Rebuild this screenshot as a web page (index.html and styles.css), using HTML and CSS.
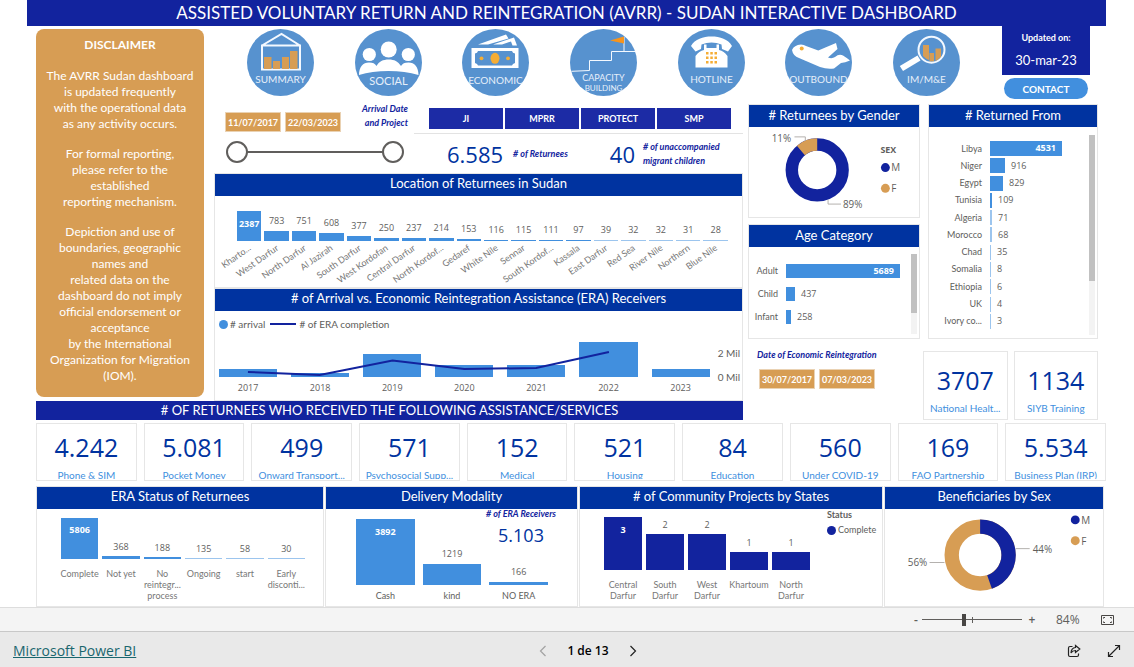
FILE: index.html
```html
<!DOCTYPE html>
<html lang="en">
<head>
<meta charset="utf-8">
<title>AVRR - Sudan Interactive Dashboard</title>
<link rel="stylesheet" href="styles.css">
</head>
<body>
<header class="title"><h1>ASSISTED VOLUNTARY RETURN AND REINTEGRATION (AVRR) - SUDAN INTERACTIVE DASHBOARD</h1></header>

<main class="board">
  <div class="upper">
    <aside class="disclaimer">
      <h2>DISCLAIMER</h2>
      <p>The AVRR Sudan dashboard<br>is updated frequently<br>with the operational data<br>as any activity occurs.</p>
      <p>For formal reporting,<br>please refer to the<br>established<br>reporting mechanism.</p>
      <p>Depiction and use of<br>boundaries, geographic<br>names and<br>related data on the<br>dashboard do not imply<br>official endorsement or<br>acceptance<br>by the International<br>Organization for Migration<br>(IOM).</p>
    </aside>

    <div class="top">
      <nav class="pages">
        <a href="#summary"><svg viewBox="0 0 67 67"><circle class="disc" cx="33.500" cy="33.500" r="33.500"/>
          <path class="line" d="M15 16.500H53V40.500H15ZM15 16.500L34.500 5L53 16.500"/>
          <path class="gold" d="M17 28h7.500v12H17zM26 32h7v8h-7zM35 28h7v12h-7zM43 22h7.500v18H43z"/>
          <text x="33.500" y="54" font-size="10">SUMMARY</text></svg></a>
        <a href="#social"><svg viewBox="0 0 67 67"><circle class="disc" cx="33.500" cy="33.500" r="33.500"/>
          <g class="white"><circle cx="14.300" cy="25.500" r="6.600"/><circle cx="53.300" cy="25.500" r="6.600"/><circle cx="33.700" cy="20.500" r="8"/>
          <path d="M4 46C4 38 8 33.500 14 33.500c4 0 6 1 7.500 3.500C24 32.500 28 30.500 33.700 30.500S43 32.500 46 37c1.500-2.500 3.500-3.500 7.500-3.500 6 0 10 4.500 10 12.500Q50 42 33.500 42T4 46Z"/></g>
          <text x="33.500" y="56" font-size="11">SOCIAL</text></svg></a>
        <a href="#economic"><svg viewBox="0 0 67 67"><circle class="disc" cx="33.500" cy="33.500" r="33.500"/>
          <path class="white" d="M9.500 19H56.500V39H9.500ZM16 15.500L44 5.500 46.500 9.500 26 15.500ZM31 15.500L52 8.500 55 16.500H50.500L49 12.500 40 15.500Z"/>
          <path class="disc" d="M16 22H50Q50.500 24 53 24.500V34Q50.500 34.500 50 36.500H16Q15.500 34.500 13 34V24.500Q15.500 24 16 22Z"/>
          <g class="amber"><ellipse cx="33" cy="29.300" rx="4.500" ry="5.500"/><circle cx="19.500" cy="29.300" r="1.900"/><circle cx="46" cy="29.300" r="1.900"/></g>
          <text x="33.500" y="54.500" font-size="10">ECONOMIC</text></svg></a>
        <a href="#capacity"><svg viewBox="0 0 67 67"><circle class="disc" cx="33.500" cy="33.500" r="33.500"/>
          <path class="line thin" d="M1.500 42.300L19.500 41.500V31.500H41.500V22.500H65M54 22.500V8"/>
          <path class="flag" d="M40 11.500L54 7.500V14.500Z"/>
          <text x="33.500" y="52" font-size="9">CAPACITY</text><text x="33.500" y="62" font-size="8">BUILDING</text></svg></a>
        <a href="#hotline"><svg viewBox="0 0 67 67"><circle class="disc" cx="33.500" cy="33.500" r="33.500"/>
          <path class="white" d="M13 17C17 10 25 7.500 33.500 7.500S50 10 54 17L50 22.500 44 20 43.500 15.500Q33.500 11.500 23.500 15.500L23 20 17.500 22.500ZM26 15.500H28.500V19H38.500V15.500H41V21Q46 22 49.500 27V38.500H17.500V27Q21 22 26 21Z"/>
          <path class="amber" d="M28 23h2.500v2.500H28zM32.300 23h2.500v2.500h-2.500zM36.500 23H39v2.500h-2.500zM28 27.500h2.500V30H28zM32.300 27.500h2.500V30h-2.500zM36.500 27.500H39V30h-2.500zM28 32h2.500v2.500H28zM32.300 32h2.500v2.500h-2.500zM36.500 32H39v2.500h-2.500z"/>
          <text x="33.500" y="54" font-size="10">HOTLINE</text></svg></a>
        <a href="#outbound"><svg viewBox="0 0 67 67"><circle class="disc" cx="33.500" cy="33.500" r="33.500"/>
          <path class="white" d="M7 21Q9 16 16 15.500 19 15.500 21 17L33.300 21.500 51 14 52.500 20 43 28.500Q47 30 50 28 54 24.500 58 26.500 62 29 65 31.500 60 33.500 56 34L49 39.500Q42 40.500 35 38L14 29Q8 27 7 21Z"/>
          <circle class="amber" cx="16.700" cy="19.500" r="2"/>
          <text x="33.500" y="54" font-size="10">OUTBOUND</text></svg></a>
        <a href="#imme"><svg viewBox="0 0 67 67"><circle class="disc" cx="33.500" cy="33.500" r="33.500"/>
          <path class="gold" d="M30 16h6v15q-3-1-6-4zM36.500 24H41v8.500h-4.500zM42.500 19.500h5.500V28q-3 3-5.500 4z"/>
          <circle class="line" cx="38.500" cy="20.700" r="13"/>
          <path class="white" d="M24.500 26.500L27.500 31.500 10 42 6.800 37Z"/>
          <text x="33.500" y="54" font-size="10">IM/M&amp;E</text></svg></a>
      </nav>
      <div class="updated-col">
        <div class="updated"><span>Updated on:</span><strong>30-mar-23</strong></div>
        <button class="contact" type="button">CONTACT</button>
      </div>
    </div>

    <div class="middle">
      <div class="filters">
        <div class="arrival">
          <div class="arrival-head">
            <div class="dates">
              <input class="date" type="text" value="11/07/2017" aria-label="Arrival from">
              <input class="date" type="text" value="22/03/2023" aria-label="Arrival to">
            </div>
            <p class="note">Arrival Date<br>and Project</p>
          </div>
          <div class="range">
            <input type="range" min="0" max="100" value="0" aria-label="Range start">
            <input type="range" min="0" max="100" value="100" aria-label="Range end">
          </div>
        </div>
        <div class="projects">
          <div class="project-buttons">
            <button type="button">JI</button><button type="button">MPRR</button><button type="button">PROTECT</button><button type="button">SMP</button>
          </div>
          <div class="totals">
            <b class="num">6.585</b><span class="note"># of Returnees</span>
            <b class="num second">40</b><span class="note"># of unaccompanied<br>migrant children</span>
          </div>
        </div>
      </div>

      <section class="panel location">
        <h2>Location of Returnees in Sudan</h2>
        <div class="cols slanted">
          <div><b class="in">2387</b><i style="height:30px"></i><span>Kharto...</span></div>
          <div><b>783</b><i style="height:10px"></i><span>West Darfur</span></div>
          <div><b>751</b><i style="height:10px"></i><span>North Darfur</span></div>
          <div><b>608</b><i style="height:8px"></i><span>Al Jazirah</span></div>
          <div><b>377</b><i style="height:5px"></i><span>South Darfur</span></div>
          <div><b>250</b><i style="height:3px"></i><span>West Kordofan</span></div>
          <div><b>237</b><i style="height:3px"></i><span>Central Darfur</span></div>
          <div><b>214</b><i style="height:3px"></i><span>North Kordof...</span></div>
          <div><b>153</b><i style="height:2px"></i><span>Gedaref</span></div>
          <div><b>116</b><i style="height:1px"></i><span>White Nile</span></div>
          <div><b>115</b><i style="height:1px"></i><span>Sennar</span></div>
          <div><b>111</b><i style="height:1px"></i><span>South Kordof...</span></div>
          <div><b>97</b><i style="height:1px"></i><span>Kassala</span></div>
          <div><b>39</b><i class="faint" style="height:1px"></i><span>East Darfur</span></div>
          <div><b>32</b><i class="faint" style="height:1px"></i><span>Red Sea</span></div>
          <div><b>32</b><i class="faint" style="height:1px"></i><span>River Nile</span></div>
          <div><b>31</b><i class="faint" style="height:1px"></i><span>Northern</span></div>
          <div><b>28</b><i class="faint" style="height:1px"></i><span>Blue Nile</span></div>
        </div>
      </section>

      <section class="panel arrivals">
        <h2># of Arrival vs. Economic Reintegration Assistance (ERA) Receivers</h2>
        <div class="legend"><i class="dot sky"></i># arrival<i class="dash"></i># of ERA completion</div>
        <div class="combo">
          <div class="combo-plot">
            <div class="cols years">
              <div><i style="height:8px"></i><span>2017</span></div>
              <div><i style="height:4px"></i><span>2018</span></div>
              <div><i style="height:23px"></i><span>2019</span></div>
              <div><i style="height:12px"></i><span>2020</span></div>
              <div><i style="height:12px"></i><span>2021</span></div>
              <div><i style="height:35px"></i><span>2022</span></div>
              <div><i style="height:8px"></i><span>2023</span></div>
            </div>
            <svg class="trend" viewBox="0 0 492 36" preserveAspectRatio="none"><polyline points="29,30 101,33 174,18.500 246,27 318,26 391,10"/></svg>
          </div>
          <div class="axis"><span>2 Mil</span><span>0 Mil</span></div>
        </div>
      </section>
    </div>

    <div class="right">
      <section class="panel gender">
        <h2># Returnees by Gender</h2>
        <svg class="pie" viewBox="0 0 172 90">
          <circle class="ring navy" cx="69" cy="43.500" r="25.700" stroke-width="12.600"/>
          <path class="ring tan" d="M52.500 23.800A25.700 25.700 0 0 1 69 17.800" stroke-width="12.600"/>
          <path class="lead" d="M46 10H57V14M80 74V78H93"/>
          <text x="23" y="15">11%</text><text x="95" y="82">89%</text>
          <text class="strong" x="133" y="26">SEX</text>
          <circle class="fill-navy" cx="138" cy="41" r="4.500"/><text x="144" y="45">M</text>
          <circle class="fill-tan" cx="138" cy="62" r="4.500"/><text x="144" y="66">F</text>
        </svg>
      </section>
      <section class="panel age">
        <h2>Age Category</h2>
        <div class="rows">
          <div><span>Adult</span><i style="width:114px"><b>5689</b></i></div>
          <div><span>Child</span><i style="width:9px"></i><b>437</b></div>
          <div><span>Infant</span><i style="width:5px"></i><b>258</b></div>
          <div class="scroll"></div>
        </div>
      </section>
      <section class="panel from">
        <h2># Returned From</h2>
        <div class="rows">
          <div><span>Libya</span><i style="width:72px"><b>4531</b></i></div>
          <div><span>Niger</span><i style="width:15px"></i><b>916</b></div>
          <div><span>Egypt</span><i style="width:13px"></i><b>829</b></div>
          <div><span>Tunisia</span><i style="width:2px"></i><b>109</b></div>
          <div><span>Algeria</span><i class="faint" style="width:2px"></i><b>71</b></div>
          <div><span>Morocco</span><i class="faint" style="width:2px"></i><b>68</b></div>
          <div><span>Chad</span><i class="faint" style="width:1px"></i><b>35</b></div>
          <div><span>Somalia</span><i class="faint" style="width:1px"></i><b>8</b></div>
          <div><span>Ethiopia</span><i class="faint" style="width:1px"></i><b>6</b></div>
          <div><span>UK</span><i class="faint" style="width:1px"></i><b>4</b></div>
          <div><span>Ivory co...</span><i class="faint" style="width:1px"></i><b>3</b></div>
          <div class="scroll"></div>
        </div>
      </section>
      <div class="era-date">
        <p class="note">Date of Economic Reintegration</p>
        <div class="dates">
          <input class="date" type="text" value="30/07/2017" aria-label="Reintegration from">
          <input class="date" type="text" value="07/03/2023" aria-label="Reintegration to">
        </div>
      </div>
      <div class="pair">
        <div class="kpi"><b>3707</b><span>National Healt...</span></div>
        <div class="kpi"><b>1134</b><span>SIYB Training</span></div>
      </div>
    </div>

    <h2 class="band"># OF RETURNEES WHO RECEIVED THE FOLLOWING ASSISTANCE/SERVICES</h2>
  </div>

  <div class="services">
    <div class="kpi"><b>4.242</b><span>Phone &amp; SIM</span></div>
    <div class="kpi"><b>5.081</b><span>Pocket Money</span></div>
    <div class="kpi"><b>499</b><span>Onward Transport...</span></div>
    <div class="kpi"><b>571</b><span>Psychosocial Supp...</span></div>
    <div class="kpi"><b>152</b><span>Medical</span></div>
    <div class="kpi"><b>521</b><span>Housing</span></div>
    <div class="kpi"><b>84</b><span>Education</span></div>
    <div class="kpi"><b>560</b><span>Under COVID-19</span></div>
    <div class="kpi"><b>169</b><span>FAO Partnership</span></div>
    <div class="kpi"><b>5.534</b><span>Business Plan (IRP)</span></div>
  </div>

  <div class="lower">
    <section class="panel status">
      <h2>ERA Status of Returnees</h2>
      <div class="cols small">
        <div><b class="in">5806</b><i style="height:41px"></i><span>Complete</span></div>
        <div><b>368</b><i style="height:3px"></i><span>Not yet</span></div>
        <div><b>188</b><i style="height:2px"></i><span>No<br>reintegr...<br>process</span></div>
        <div><b>135</b><i class="faint" style="height:1px"></i><span>Ongoing</span></div>
        <div><b>58</b><i class="faint" style="height:1px"></i><span>start</span></div>
        <div><b>30</b><i class="faint" style="height:1px"></i><span>Early<br>disconti...</span></div>
      </div>
    </section>
    <section class="panel delivery">
      <h2>Delivery Modality</h2>
      <div class="cols">
        <div><b class="in">3892</b><i style="height:66px"></i><span>Cash</span></div>
        <div><b>1219</b><i style="height:21px"></i><span>kind</span></div>
        <div><b>166</b><i style="height:3px"></i><span>NO ERA</span></div>
      </div>
      <div class="receivers"><span class="note"># of ERA Receivers</span><b>5.103</b></div>
    </section>
    <section class="panel community">
      <h2># of Community Projects by States</h2>
      <div class="community-body">
        <div class="cols small">
          <div><b class="in">3</b><i style="height:53px"></i><span>Central<br>Darfur</span></div>
          <div><b>2</b><i style="height:36px"></i><span>South<br>Darfur</span></div>
          <div><b>2</b><i style="height:36px"></i><span>West<br>Darfur</span></div>
          <div><b>1</b><i style="height:18px"></i><span>Khartoum</span></div>
          <div><b>1</b><i style="height:18px"></i><span>North<br>Darfur</span></div>
        </div>
        <div class="key"><strong>Status</strong><span><i class="dot navy"></i>Complete</span></div>
      </div>
    </section>
    <section class="panel sex">
      <h2>Beneficiaries by Sex</h2>
      <svg class="pie" viewBox="0 0 220 96">
        <circle class="ring tan" cx="96" cy="46.500" r="28.700" stroke-width="14.500"/>
        <path class="ring navy" d="M96 17.800A28.700 28.700 0 0 1 105.500 73.600" stroke-width="14.500"/>
        <path class="lead" d="M45 54H60M132 40H146"/>
        <text x="23" y="58">56%</text><text x="149" y="44">44%</text>
        <circle class="fill-navy" cx="192" cy="11" r="4.500"/><text x="198" y="15">M</text>
        <circle class="fill-tan" cx="192" cy="32" r="4.500"/><text x="198" y="36">F</text>
      </svg>
    </section>
  </div>
</main>

<div class="zoombar">
  <button type="button" aria-label="Zoom out">-</button>
  <input type="range" min="0" max="100" value="42" aria-label="Zoom">
  <button type="button" aria-label="Zoom in">+</button>
  <span>84%</span>
  <button type="button" aria-label="Fit to page"><svg width="15" height="12" viewBox="0 0 15 12"><path d="M1.500 1.500H13.500V10.500H1.500ZM3.500 4.500V3.500H5M3.500 7.500V8.500H5M11.500 4.500V3.500H10M11.500 7.500V8.500H10"/></svg></button>
</div>
<footer class="foot">
  <a href="#powerbi">Microsoft Power BI</a>
  <div class="pager">
    <button type="button" aria-label="Previous page" disabled><svg width="8" height="12" viewBox="0 0 8 12"><path d="M6.500 1L1.500 6 6.500 11"/></svg></button>
    <span>1 de 13</span>
    <button type="button" aria-label="Next page"><svg width="8" height="12" viewBox="0 0 8 12"><path d="M1.500 1L6.500 6 1.500 11"/></svg></button>
  </div>
  <div class="tools">
    <button type="button" aria-label="Share"><svg width="14" height="14" viewBox="0 0 14 14"><path d="M5.500 2.500H3Q1.500 2.500 1.500 4V11Q1.500 12.500 3 12.500H10Q11.500 12.500 11.500 11V9.500M8.500 1.500L12.800 5 8.500 8.500V6.500Q5.500 6.500 4 9 4.200 4 8.500 3.500Z"/></svg></button>
    <button type="button" aria-label="Full screen"><svg width="14" height="14" viewBox="0 0 14 14"><path d="M1.500 12.500L12.500 1.500M8 1.500H12.500V6M1.500 8V12.500H6"/></svg></button>
  </div>
</footer>
</body>
</html>
```
FILE: styles.css
```css
* { box-sizing: border-box; }
body {
  margin: 0;
  min-height: 100vh;
  display: flex;
  flex-direction: column;
  background: #fff;
  color: #605e5c;
  font: 10px/12px Lato, "Open Sans", sans-serif;
}
h1, h2, p { margin: 0; font-weight: 400; }
button, input { font: inherit; color: inherit; margin: 0; padding: 0; border: 0; background: none; }
b, i { font-weight: 400; font-style: normal; }

.title { margin: 0 28px 0 27px; background: #12239e; color: #fff; text-align: center; }
.title h1 { font-size: 17px; line-height: 26px; }
.board { flex: 1; padding: 0 28px 0 36px; }

.upper {
  display: grid;
  grid-template-columns: 178fr 529fr 355fr;
  grid-template-rows: 78px 297px 19px;
  margin-right: 8px;
}
.upper > .disclaimer { grid-area: 1 / 1 / 3 / 2; }
.upper > .top { grid-area: 1 / 2 / 2 / 4; }
.upper > .middle { grid-area: 2 / 2 / 3 / 3; }
.upper > .right { grid-area: 2 / 3 / 4 / 4; }
.upper > .band { grid-area: 3 / 1 / 4 / 3; }
.right { margin-left: 5px; }

.disclaimer {
  margin: 3px 10px 4px 0;
  padding: 8px 4px;
  border-radius: 8px;
  background: #d79d54;
  color: #fff;
  font-size: 12px;
  line-height: 16px;
  font-weight: 700;
  text-align: center;
}
.disclaimer h2 { font-size: 12px; font-weight: 700; margin-bottom: 15px; }
.disclaimer p { margin-bottom: 14px; }

.top { display: flex; justify-content: space-between; padding: 0 8px 0 33px; }
.pages { display: flex; flex: 1; justify-content: space-between; align-items: center; margin-right: 42px; padding-bottom: 6px; }
.pages a { display: block; width: 67px; height: 67px; }
.pages svg { display: block; width: 100%; height: 100%; }
.pages text { fill: #e6effa; text-anchor: middle; font-family: Lato, sans-serif; }
.disc { fill: #5792cf; }
.white { fill: #fff; }
.gold { fill: #d79d54; }
.amber { fill: #f5ad35; }
.flag { fill: #f7941d; }
.line { fill: none; stroke: #f4f9ff; stroke-width: 2; }
.thin { stroke-width: 1; }
.updated-col { width: 88px; display: flex; flex-direction: column; align-items: center; gap: 3px; }
.updated { width: 100%; height: 49px; padding-top: 6px; background: #12239e; color: #fff; text-align: center; }
.updated span { display: block; font-size: 9px; font-weight: 700; }
.updated strong { display: block; font-size: 13px; font-weight: 400; line-height: 16px; margin-top: 8px; }
.contact { width: 84px; height: 21px; border-radius: 11px; background: #418fde; color: #fff; font-weight: 700; }

.middle { display: flex; flex-direction: column; }
.filters { display: flex; height: 69px; }
.arrival { width: 200px; padding-left: 11px; }
.arrival-head { display: flex; justify-content: space-between; align-items: flex-end; }
.dates { display: flex; gap: 4px; }
.date { width: 56px; height: 20px; border: 1px solid #ead2b3; background: #d79d54; color: #fff; font-size: 9px; font-weight: 700; text-align: center; }
.note { color: #12239e; font-size: 9px; line-height: 14px; font-weight: 700; font-style: italic; }
.arrival .note { text-align: right; padding: 0 6px 2px 0; margin-top: -2px; }
.range { position: relative; height: 24px; margin: 8px 10px 0 1px; }
.range::before { content: ""; position: absolute; inset: 11px 11px auto 11px; height: 2px; background: #605e5c; }
.range input { position: absolute; inset: 0; width: 100%; height: 24px; appearance: none; background: none; pointer-events: none; }
.range input::-webkit-slider-thumb { appearance: none; width: 22px; height: 22px; border: 2px solid #605e5c; border-radius: 50%; background: #fff; pointer-events: auto; }
.projects { flex: 1; }
.project-buttons { display: grid; grid-template-columns: repeat(4, 1fr); gap: 2px; padding: 4px 12px 4px 15px; border-bottom: 1px solid #e3e3e3; }
.project-buttons button { height: 21px; background: #1c2ba5; color: #fff; font-size: 9px; font-weight: 700; }
.totals { display: flex; align-items: center; height: 39px; padding-left: 33px; }
.num { font: 22px/28px "Open Sans", sans-serif; color: #0033a0; margin-right: 10px; }
.num.second { margin-left: 42px; margin-right: 8px; }

.panel { position: relative; border: 1px solid #e6e6e6; }
.panel h2 { height: 22px; background: #0033a0; color: #fff; font-size: 13px; line-height: 20px; text-align: center; }
.middle .panel h2 { line-height: 19px; }
.location { height: 115px; }
.arrivals { height: 113px; }
.cols { display: flex; align-items: flex-end; gap: 3px; font-family: "Open Sans", sans-serif; font-size: 9px; }
.cols > div { flex: 1; position: relative; display: flex; flex-direction: column; text-align: center; }
.cols i { background: #418fde; }
.cols b { line-height: 12px; }
.cols .in { position: absolute; top: 7px; width: 100%; color: #fff; font-weight: 700; }
.cols span { font-family: Lato, sans-serif; }
.cols i.faint, .rows i.faint { background: #9cc5ee; }
.slanted { height: 45px; padding: 0 14px 0 22px; }
.slanted b { margin-bottom: 4px; }
.slanted span { position: absolute; top: 100%; right: 15px; margin-top: 1px; white-space: nowrap; color: #777; transform: rotate(-35deg); transform-origin: 100% 0; }
.legend { display: flex; align-items: center; padding: 6px 4px 0; height: 20px; }
.dot { width: 9px; height: 9px; border-radius: 50%; margin-right: 2px; }
.sky { background: #418fde; }
.dot.navy { background: #12239e; }
.dash { width: 26px; height: 2px; margin: 0 3px 0 5px; background: #12239e; }
.combo { display: flex; padding: 0 2px 0 4px; margin-top: 11px; }
.combo-plot { position: relative; flex: 1; }
.years { height: 52px; gap: 14px; }
.years span { height: 17px; padding-top: 5px; font-family: "Open Sans", sans-serif; }
.trend { position: absolute; left: 0; top: 0; width: 100%; height: 36px; }
.trend polyline { fill: none; stroke: #12239e; stroke-width: 2; }
.axis { display: flex; flex-direction: column; gap: 12px; padding: 5px 0 0 8px; white-space: nowrap; }

.right { display: grid; grid-template-columns: 172fr 170fr; grid-template-rows: 114px 6px 115px 12px 69px; column-gap: 8px; }
.gender { grid-area: 1 / 1; }
.age { grid-area: 3 / 1; }
.from { grid-area: 1 / 2 / 4 / 3; }
.era-date { grid-area: 5 / 1; padding: 0 0 0 9px; }
.era-date .note { line-height: 8px; margin-bottom: 10px; }
.era-date .dates { padding-left: 2px; }
.pair { grid-area: 5 / 2; margin-left: -5px; display: grid; grid-template-columns: 1fr 1fr; gap: 6px; }
.pie { display: block; width: 100%; }
.pie text { fill: #605e5c; font: 10px "Open Sans", sans-serif; }
.pie .strong { font-size: 9px; font-weight: 700; }
.ring { fill: none; }
.ring.navy { stroke: #12239e; }
.ring.tan { stroke: #d79d54; }
.fill-navy { fill: #12239e; }
.fill-tan { fill: #d79d54; }
.lead { fill: none; stroke: #b3b0ad; }
.rows { position: relative; display: flex; flex-direction: column; }
.rows > div:not(.scroll) { flex: 1; display: flex; align-items: center; font-size: 9px; }
.rows span { text-align: right; }
.rows i { background: #418fde; text-align: right; }
.rows b { font: 9px/14px "Open Sans", sans-serif; margin-left: 6px; }
.rows i b { display: block; margin: 0 6px; color: #fff; font-weight: 700; }
.scroll { position: absolute; right: 2px; width: 6px; background: linear-gradient(#c1c1c1 var(--thumb), #f3f3f3 var(--thumb)); }
.age .rows { padding-top: 12px; height: 81px; }
.age .rows span { width: 29px; margin-right: 8px; }
.age .rows i { height: 14px; }
.age .scroll { --thumb: 59px; top: 7px; height: 80px; }
.from .rows { padding-top: 13px; height: 203px; }
.from .rows span { width: 53px; margin-right: 8px; }
.from .rows i { height: 15px; }
.from .scroll { --thumb: 146px; top: 8px; height: 200px; }

.band { background: #12239e; color: #fff; font-size: 13px; line-height: 19px; text-align: center; }
.kpi { border: 1px solid #e6e6e6; padding: 13px 3px 0; text-align: center; overflow: hidden; }
.kpi b { display: block; font: 25px/30px "Open Sans", sans-serif; color: #0033a0; }
.kpi span { display: block; margin-top: 7px; color: #418fde; white-space: nowrap; }
.services { display: grid; grid-template-columns: repeat(10, 1fr); gap: 7px; margin-top: 3px; }
.services .kpi { height: 58px; padding-top: 8px; }
.services .kpi span { height: 10px; overflow: hidden; }

.lower { display: grid; grid-template-columns: 288fr 253fr 304fr 220fr; gap: 1px; margin: 5px 2px 0 0; }
.lower .panel { height: 121px; }
.lower .panel h2 { line-height: 19px; }
.small > div { justify-content: flex-end; }
.small span { font-size: 9px; line-height: 11px; height: 36px; margin: 9px -4px 0; color: #777; }
.status .cols { height: 95px; padding: 8px 18px 0 24px; align-items: stretch; gap: 4px; }
.status b:not(.in) { margin-bottom: 3px; }
.delivery .cols { height: 95px; padding: 0 29px 0 30px; gap: 8px; }
.delivery .cols span { height: 19px; padding-top: 5px; }
.delivery b:not(.in) { margin-bottom: 4px; }
.receivers { position: absolute; top: 22px; right: 12px; width: 88px; text-align: center; }
.receivers .note { display: block; line-height: 10px; }
.receivers b { display: block; margin-top: 4px; font: 18px/24px "Open Sans", sans-serif; color: #0033a0; }
.community-body { display: flex; }
.community .cols { width: 230px; height: 92px; padding-left: 24px; gap: 4px; }
.community .cols i { background: #12239e; }
.community b:not(.in) { margin-bottom: 3px; }
.community .small span { height: 22px; }
.key { padding-left: 17px; font-size: 9px; }
.key strong { display: block; }
.key span { display: flex; align-items: center; margin-top: 3px; }

.zoombar { display: flex; align-items: center; justify-content: flex-end; height: 24px; padding-right: 19px; background: #f4f4f4; border-top: 1px solid #ddd; color: #605e5c; font: 12px/16px "Open Sans", sans-serif; }
.zoombar button { width: 12px; font-weight: 600; }
.zoombar button:last-child { width: 15px; }
.zoombar span { width: 24px; margin: 0 20px 0 18px; }
.zoombar input { width: 100px; height: 12px; margin: 0 4px 0 0; appearance: none; background: linear-gradient(#605e5c, #605e5c) 50px 50% / 1px 6px no-repeat, linear-gradient(#605e5c, #605e5c) 0 50% / 100% 1px no-repeat; }
.zoombar input::-webkit-slider-thumb { appearance: none; width: 4px; height: 12px; background: #484644; }
.zoombar svg, .foot svg { display: block; fill: none; stroke: #484644; }
.foot { display: grid; grid-template-columns: 1fr auto 1fr; align-items: center; height: 37px; padding: 2px 13px 0; background: #e9e9e9; border-top: 1px solid #c8c8c8; font: 14px/18px "Open Sans", sans-serif; }
.foot a { color: #19666e; }
.pager { display: flex; align-items: center; gap: 20px; margin-left: 42px; color: #000; font: 600 12px/16px "Open Sans", sans-serif; }
.pager button:disabled { opacity: .35; }
.foot svg { stroke: #222; stroke-width: 1.2; }
.tools { display: flex; justify-content: flex-end; gap: 26px; }
```
